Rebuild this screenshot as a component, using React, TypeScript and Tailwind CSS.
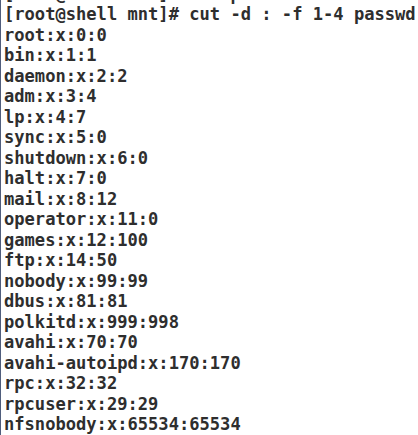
import React from 'react';

const lines = [
  '[root@shell mnt]# vim passwd',
  '[root@shell mnt]# cut -d : -f 1-4 passwd',
  'root:x:0:0',
  'bin:x:1:1',
  'daemon:x:2:2',
  'adm:x:3:4',
  'lp:x:4:7',
  'sync:x:5:0',
  'shutdown:x:6:0',
  'halt:x:7:0',
  'mail:x:8:12',
  'operator:x:11:0',
  'games:x:12:100',
  'ftp:x:14:50',
  'nobody:x:99:99',
  'dbus:x:81:81',
  'polkitd:x:999:998',
  'avahi:x:70:70',
  'avahi-autoipd:x:170:170',
  'rpc:x:32:32',
  'rpcuser:x:29:29',
  'nfsnobody:x:65534:65534',
];

export default function App() {
  return (
    <div className="w-[418px] h-[435px] overflow-hidden bg-white border-l border-[#4f5d7c]">
      {/* terminal output, first line scrolled mostly out of view */}
      <div className="mt-[-16.5px] pl-[3px] font-['DejaVu_Sans_Mono',monospace] font-bold text-[17.1px] leading-[20.5px] text-[#2e2e2e]">
        {lines.map((line, i) => (
          <div key={i} className="whitespace-pre">
            {line}
          </div>
        ))}
      </div>
    </div>
  );
}
